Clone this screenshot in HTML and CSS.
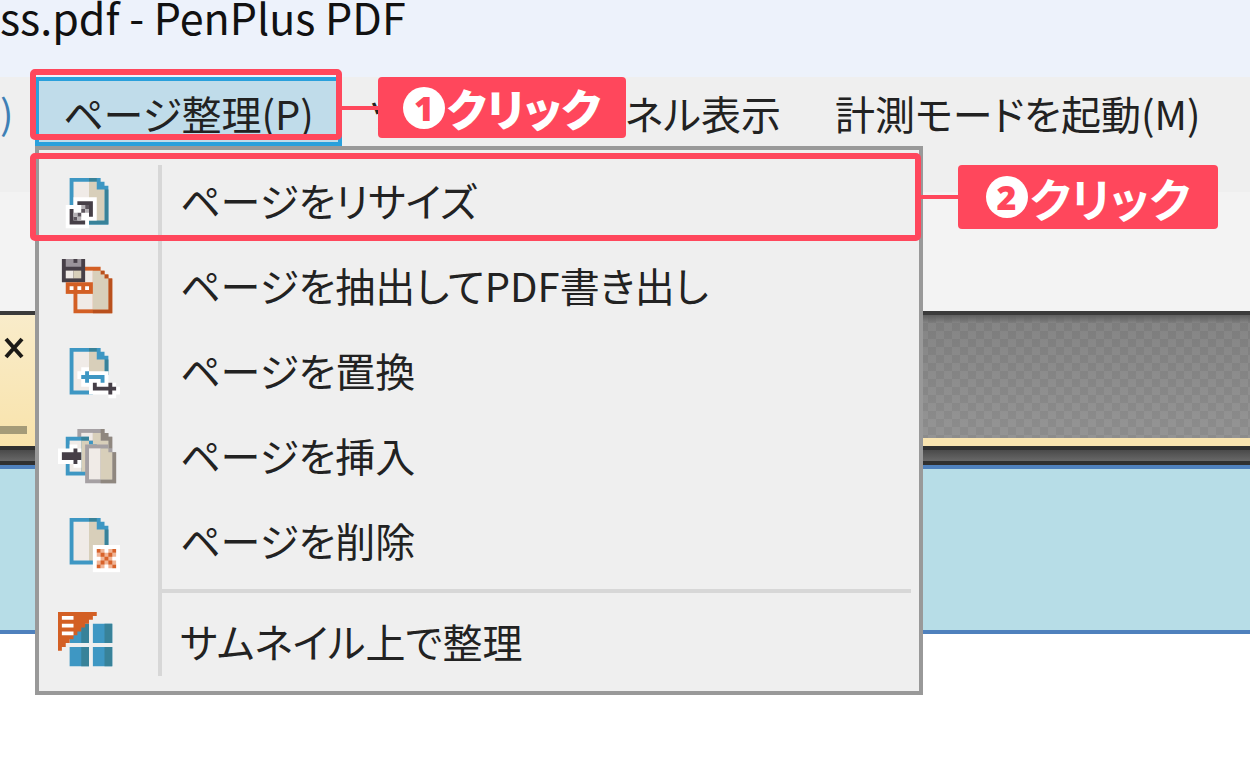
FILE: index.html
```
<!DOCTYPE html>
<html lang="ja">
<head>
  <meta charset="UTF-8">
  <meta name="viewport" content="width=device-width, initial-scale=1.0">
  <title>PenPlus PDF</title>
  <link rel="stylesheet" href="styles.css">
</head>
<body>
  <header class="titlebar">ss.pdf - PenPlus PDF</header>

  <nav class="menubar">
    <button type="button" class="menu-cut">)</button>
    <div class="menu-wrap">
      <button type="button" class="menu-button active">ページ整理(P)</button>
      <div class="marker marker-button"></div>
      <div class="callout callout-one"><span class="number">1</span>クリック</div>

      <div class="dropdown">
        <button type="button" class="item">
          <svg class="icon" viewBox="0 0 16 16">
            <path fill="#3e97c3" d="M3 1h8v1h1v1h1v10H3z"/>
            <path fill="#388299" d="M8 1h2v1H8zM12 4h1v9H8v-1h4z"/>
            <path fill="#f0ebe7" d="M4 2h4v10H4z"/>
            <path fill="#d8cfba" d="M8 2h2v2h2v8H8z"/>
            <path fill="#fff" d="M4 6h6v6H8v2H2V8h2z"/>
            <path fill="#463f47" d="M5 7h4v4H8V8H5zM3 9h1v3h3v1H3z"/>
            <path fill="#5d565e" d="M7 8h1v1H7zM6 9h1v1H6zM5 10h1v1H5zM4 11h1v1H4z"/>
            <path fill="#b5b1b5" d="M6 8h1v1H6zM7 9h1v1H7zM4 10h1v1H4zM5 11h1v1H5z"/>
          </svg>
          <span class="label">ページをリサイズ</span>
          <span class="marker marker-item"></span>
          <span class="callout callout-two"><span class="number">2</span>クリック</span>
        </button>
        <button type="button" class="item">
          <svg class="icon" viewBox="0 0 16 16">
            <path fill="#d35f24" d="M5 2h6v1h1v1h1v1h1v9H4V8h1z"/>
            <path fill="#b9501d" d="M11 3h1v1h-1zM12 4h1v1h-1zM13 5h1v9H9v-1h4z"/>
            <path fill="#f0ebe7" d="M5 3h4v10H5z"/>
            <path fill="#d8cfba" d="M9 3h2v1h1v1h1v8H9z"/>
            <path fill="#463f47" d="M1 0h6v6H1z"/>
            <path fill="#99939a" d="M2 0h4v2H2z"/>
            <path fill="#463f47" d="M4 0h1v1H4z"/>
            <path fill="#f0ebe7" d="M2 3h2v2H2z"/>
            <path fill="#d8cfba" d="M4 3h2v2H4z"/>
            <path fill="#d35f24" d="M2 6h7v3H2z"/>
            <path fill="#fff" d="M3 7h1v1H3zM5 7h1v1H5zM7 7h1v1H7z"/>
          </svg>
          <span class="label">ページを抽出してPDF書き出し</span>
        </button>
        <button type="button" class="item">
          <svg class="icon" viewBox="0 0 16 16">
            <path fill="#3e97c3" d="M3 1h8v1h1v1h1v4h-1v4H9v2H3z"/>
            <path fill="#388299" d="M8 1h2v1H8zM12 4h1v4h-1z"/>
            <path fill="#f0ebe7" d="M4 2h4v10H4z"/>
            <path fill="#d8cfba" d="M8 2h2v2h2v4H8z"/>
            <path fill="#fff" d="M6 6h2v1h5v3h2v1h1v2h-1v1h-2v-1H8v-2H6V9H5V7h1z"/>
            <path fill="#3e97c3" d="M6 8h1V7h1v1h4v2h-1V9H8v1H7V9H6z"/>
            <path fill="#463f47" d="M9 10h1v1h3v-1h1v1h1v1h-1v1h-1v-1H9z"/>
          </svg>
          <span class="label">ページを置換</span>
        </button>
        <button type="button" class="item">
          <svg class="icon" viewBox="0 0 16 16">
            <path fill="#a5a0a3" d="M5 0h7v1h1v1h1v8H5z"/>
            <path fill="#8f877f" d="M11 0h1v1h1v1h1v3h-1V3h-2z"/>
            <path fill="#f0ebe7" d="M6 1h3v2H6z"/>
            <path fill="#d8cfba" d="M9 1h2v2h2v2H9z"/>
            <path fill="#3e97c3" d="M2 2h6v1h1v1h1v8H2z"/>
            <path fill="#388299" d="M6 2h2v1H6z"/>
            <path fill="#f0ebe7" d="M3 3h3v8H3z"/>
            <path fill="#d8cfba" d="M6 3h2v1h1v7H6z"/>
            <path fill="#fff" d="M3 4h2v1h1v5H4V9H0V5h3z"/>
            <path fill="#463f47" d="M1 6h3V5h1v1h1v2H5v1H4V8H1z"/>
            <path fill="#a5a0a3" d="M7 4h6v1h1v1h1v8H7z"/>
            <path fill="#8f877f" d="M14 6h1v8h-4v-1h3z"/>
            <path fill="#f0ebe7" d="M8 5h3v8H8z"/>
            <path fill="#d8cfba" d="M11 5h2v1h1v7h-3z"/>
          </svg>
          <span class="label">ページを挿入</span>
        </button>
        <button type="button" class="item">
          <svg class="icon" viewBox="0 0 16 16">
            <path fill="#3e97c3" d="M3 1h8v1h1v1h1v10H3z"/>
            <path fill="#388299" d="M8 1h2v1H8zM12 4h1v6h-1z"/>
            <path fill="#f0ebe7" d="M4 2h4v10H4z"/>
            <path fill="#d8cfba" d="M8 2h2v2h2v8H8z"/>
            <path fill="#fff" d="M9 8h7v7H9z"/>
            <path fill="#f0b596" d="M11 9h1v1h-1zM13 9h1v1h-1zM10 10h5v1h-5zM11 11h3v1h-3zM10 12h5v1h-5zM11 13h1v1h-1zM13 13h1v1h-1z"/>
            <path fill="#d8632b" d="M10 9h1v1h-1zM14 9h1v1h-1zM11 10h1v1h-1zM13 10h1v1h-1zM12 11h1v1h-1zM11 12h1v1h-1zM13 12h1v1h-1zM10 13h1v1h-1zM14 13h1v1h-1z"/>
          </svg>
          <span class="label">ページを削除</span>
        </button>
        <hr class="separator">
        <button type="button" class="item">
          <svg class="icon" viewBox="0 0 16 16">
            <path fill="#3e97c3" d="M3 3h5v5H3zM9 3h5v5H9zM3 9h5v5H3zM9 9h5v5H9z"/>
            <path fill="#388299" d="M6 3h2v5H6zM12 3h2v5h-2zM6 9h2v5H6zM12 9h2v5h-2z"/>
            <path fill="#d35f24" d="M0 0h10v1H9v1H8v1H7v1H6v1H5v1H4v1H3v1H2v1H1v1H0z"/>
            <path fill="#fff" d="M1 1h3v1H1zM1 3h3v1H1zM1 5h3v1H1z"/>
          </svg>
          <span class="label">サムネイル上で整理</span>
        </button>
      </div>
    </div>
    <button type="button" class="menu-button">ツール(T)</button>
    <button type="button" class="menu-button">パネル表示</button>
    <button type="button" class="menu-button">計測モードを起動(M)</button>
  </nav>

  <div class="toolbar"></div>

  <div class="tabstrip">
    <div class="tab">
      <button type="button" class="close" aria-label="閉じる">
        <svg class="close-icon" viewBox="0 0 20 22"><path d="M2 2l16 18M18 2L2 20" stroke="#1c1a16" stroke-width="4"/></svg>
      </button>
      <div class="tab-line"></div>
    </div>
  </div>
  <div class="ruler"></div>
  <main class="document"></main>
</body>
</html>
```
FILE: styles.css
```
* {
  box-sizing: border-box;
}
body {
  margin: 0;
  min-height: 100vh;
  background: #fff;
  color: #222;
  font-family: "Noto Sans CJK JP", sans-serif;
  font-size: 40px;
  font-feature-settings: "palt";
  white-space: nowrap;
  overflow: hidden;
}
button {
  padding: 0;
  border: none;
  background: none;
  color: inherit;
  font: inherit;
  font-feature-settings: inherit;
  text-align: left;
  cursor: pointer;
}
.titlebar {
  height: 77px;
  background: #edf2fb;
  color: #111;
  font-size: 43px;
  line-height: 32px;
}
.menubar {
  display: flex;
  align-items: flex-start;
  height: 115px;
  background: #efefef;
}
.menu-cut {
  flex: none;
  width: 35px;
  height: 69px;
  color: #3f7fb5;
}
.menu-wrap {
  position: relative;
  flex: none;
}
.menu-button {
  flex: none;
  height: 69px;
  padding: 0 27px;
  line-height: 73px;
}
.menu-button.active {
  padding: 0 24px;
  border: 4px solid #29a0dc;
  background: #c0dcea;
  line-height: 65px;
}

/* dropdown menu */
.dropdown {
  position: absolute;
  top: 69px;
  left: 0;
  z-index: 1;
  width: 888px;
  padding: 10px 0 8px;
  border: 4px solid #999;
  background: linear-gradient(#d7d7d7, #d7d7d7) 119px 15px / 4px 511px no-repeat #efefef;
}
.item {
  position: relative;
  display: flex;
  align-items: center;
  width: 100%;
  height: 85px;
  padding-left: 19px;
}
.icon {
  flex: none;
  width: 62px;
  height: 62px;
  margin-top: 4px;
}
.label {
  margin: 0 0 6px 60px;
}
.separator {
  height: 4px;
  margin: 4px 8px 5px 123px;
  border: none;
  background: #d7d7d7;
}
.separator + .item .label {
  margin-bottom: 0;
}

/* red frames and step labels */
.marker {
  position: absolute;
  border: 6px solid #ff475c;
  border-radius: 5px;
}
.marker-button {
  top: -8px;
  left: -5px;
  right: 0;
  height: 71px;
}
.marker-item {
  top: -7px;
  left: -9px;
  right: -2px;
  height: 88px;
}
.callout {
  position: absolute;
  left: 100%;
  display: flex;
  align-items: center;
  justify-content: center;
  border-radius: 4px;
  background: #ff475c;
  color: #fff;
  font-size: 44px;
  font-weight: 900;
}
.callout::before {
  content: "";
  position: absolute;
  right: 100%;
  width: 38px;
  height: 4px;
  background: #ff475c;
}
.callout-one {
  z-index: 2;
  top: 0;
  width: 248px;
  height: 61px;
  margin-left: 36px;
}
.callout-two {
  top: 5px;
  width: 260px;
  height: 64px;
  margin-left: 39px;
  font-size: 46px;
  font-weight: 700;
}
.number {
  display: flex;
  align-items: center;
  justify-content: center;
  width: 42px;
  height: 42px;
  margin-right: 2px;
  border-radius: 50%;
  background: #fff;
  color: #ff475c;
  font-family: "Open Sans", sans-serif;
  font-size: 34px;
  font-weight: 800;
}

.toolbar {
  height: 119px;
  background: #f3f3f3;
}
.tabstrip {
  height: 135px;
  border-top: 4px solid #3b3b3b;
  background:
    linear-gradient(#f9e4b0, #f9e4b0) bottom / 100% 8px no-repeat,
    linear-gradient(#5f5f5f, transparent 8px),
    repeating-conic-gradient(#ffffff08 0 25%, #00000008 0 50%) 0 0 / 16px 16px,
    linear-gradient(#808080, #929292);
}
.tab {
  display: flex;
  flex-direction: column;
  justify-content: space-between;
  width: 35px;
  height: 100%;
  padding: 20px 0 12px;
  background: linear-gradient(#f9ecca, #f9e3ab);
}
.close {
  display: flex;
  padding-left: 4px;
}
.close-icon {
  width: 20px;
  height: 26px;
}
.tab-line {
  width: 27px;
  height: 8px;
  background: #a59b78;
}
.ruler {
  height: 19px;
  border-top: 4px solid #303030;
  border-bottom: 4px solid #303030;
  background: linear-gradient(#4a4a4a, #686868);
}
.document {
  height: 169px;
  border-top: 4px solid #4f81bd;
  border-bottom: 4px solid #4f81bd;
  background: #b7dde7;
}
```
